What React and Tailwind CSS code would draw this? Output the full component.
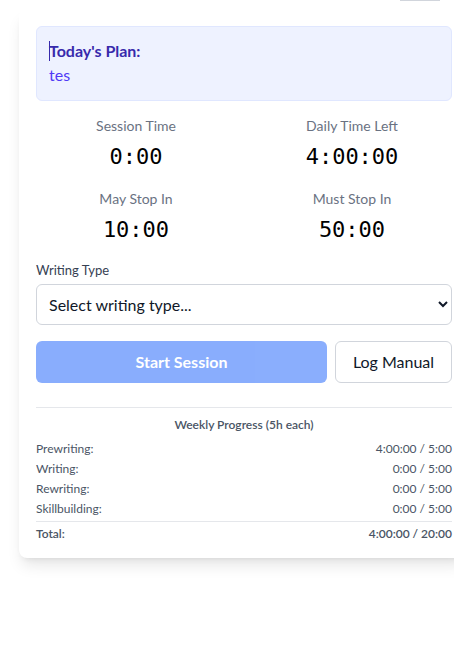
import React from "react";

const stats = [
  { label: "Session Time", value: "0:00" },
  { label: "Daily Time Left", value: "4:00:00" },
  { label: "May Stop In", value: "10:00" },
  { label: "Must Stop In", value: "50:00" },
];

const weekly = [
  { name: "Prewriting:", value: "4:00:00 / 5:00" },
  { name: "Writing:", value: "0:00 / 5:00" },
  { name: "Rewriting:", value: "0:00 / 5:00" },
  { name: "Skillbuilding:", value: "0:00 / 5:00" },
];

const App = () => {
  return (
    <div className="w-[454px] h-[651px] overflow-hidden bg-white font-['Lato','Liberation_Sans',sans-serif]">
      <div className="h-px flex">
        <div className="ml-[400px] w-[40px] h-px bg-gray-300"></div>
      </div>
      <div className="mt-[8px] ml-[19px] w-[450px] bg-white rounded-lg shadow-lg px-[17px] pt-[17px] pb-[14px]">
        <div className="bg-indigo-50 border border-indigo-100 rounded-md px-3 pt-[12px] pb-[13px]">
          <div className="flex items-center h-[24px]">
            <span className="w-px h-[20px] bg-indigo-800 -mr-px"></span>
            <h3 className="text-[16px] font-bold text-indigo-800">Today's Plan:</h3>
          </div>
          <p className="text-[16px] text-indigo-600 leading-[24px]">tes</p>
        </div>

        <div className="grid grid-cols-2 gap-x-4 gap-y-[17px] mt-[15px]">
          {stats.map((s) => (
            <div key={s.label} className="text-center">
              <div className="text-[14px] text-gray-500 leading-[20px]">{s.label}</div>
              <div className="text-[22px] leading-[30px] mt-[6px] text-black font-['DejaVu_Sans_Mono',monospace]">
                {s.value}
              </div>
            </div>
          ))}
        </div>

        <label className="block mt-[16px] text-[13px] text-gray-700 leading-[18px]">Writing Type</label>
        <select className="mt-[5px] w-full h-[41px] border border-gray-300 rounded-md pl-2 pr-2 text-[16px] text-gray-900 bg-white">
          <option>Select writing type...</option>
        </select>

        <div className="flex gap-2 mt-4">
          <button className="flex-1 h-[42px] rounded-md bg-blue-600 opacity-50 text-white font-bold text-[16px]">
            Start Session
          </button>
          <button className="w-[117px] h-[42px] rounded-md border border-gray-300 bg-white text-[16px] text-gray-900">
            Log Manual
          </button>
        </div>

        <div className="mt-[24px] border-t border-gray-200 pt-[8px]">
          <div className="text-center text-[12px] font-semibold text-gray-600 leading-[18px] mb-[5px]">
            Weekly Progress (5h each)
          </div>
          {weekly.map((w) => (
            <div key={w.name} className="flex justify-between text-[12px] text-gray-600 leading-[20px]">
              <span>{w.name}</span>
              <span>{w.value}</span>
            </div>
          ))}
          <div className="flex justify-between text-[12px] font-semibold text-gray-600 leading-[20px] border-t border-gray-200 mt-[2px] pt-[2px]">
            <span>Total:</span>
            <span>4:00:00 / 20:00</span>
          </div>
        </div>
      </div>
    </div>
  );
};

export default App;
